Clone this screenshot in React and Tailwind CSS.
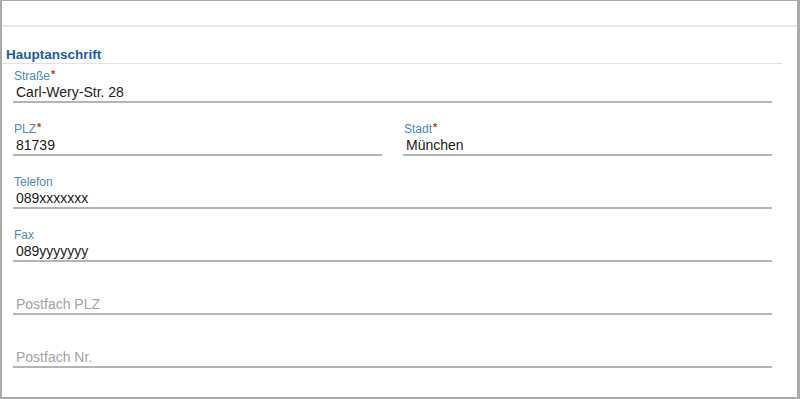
import React from "react";

const font = { fontFamily: '"Liberation Sans", Arial, Helvetica, sans-serif' };

function Field({ label, required, value, placeholder }) {
  return (
    <div className="flex flex-col border-b-2 border-[#b4b4b4]">
      <div className="h-[14px] pl-[1px] text-[12px] leading-[14px] text-[#4a89c8] whitespace-nowrap">
        {label ? (
          <>
            {label}
            {required && (
              <span className="ml-[1px] text-[11px] font-bold align-top leading-[11px] text-[#d0312d]">*</span>
            )}
          </>
        ) : null}
      </div>
      <div
        className={
          "h-[18px] pl-[3px] text-[14px] leading-[18px] whitespace-nowrap " +
          (value ? "text-[#1b1b1b]" : "text-[#a3a3a3]")
        }
      >
        {value || placeholder}
      </div>
    </div>
  );
}

export default function App() {
  return (
    <div
      className="w-[800px] h-[399px] bg-white border-l-2 border-t border-r-[3px] border-b-2 border-[#aaaaaa] flex flex-col overflow-hidden"
      style={font}
    >
      <div className="h-[26px] shrink-0 border-b-2 border-[#e8e8e8]" />
      <div className="mt-[20px] mr-[15px] h-[17px] shrink-0 border-b border-[#e2e2e2] pl-[4px] text-[13.5px] leading-[16px] font-bold text-[#1c5ca3]">
        Hauptanschrift
      </div>
      <div className="pl-[11px] pr-[25px] pt-[5px] flex flex-col gap-[19px]">
        <Field label="Straße" required value="Carl-Wery-Str. 28" />
        <div className="grid grid-cols-2 gap-x-[21px]">
          <Field label="PLZ" required value="81739" />
          <Field label="Stadt" required value="München" />
        </div>
        <Field label="Telefon" value="089xxxxxxx" />
        <Field label="Fax" value="089yyyyyyy" />
        <Field placeholder="Postfach PLZ" />
        <Field placeholder="Postfach Nr." />
      </div>
    </div>
  );
}
